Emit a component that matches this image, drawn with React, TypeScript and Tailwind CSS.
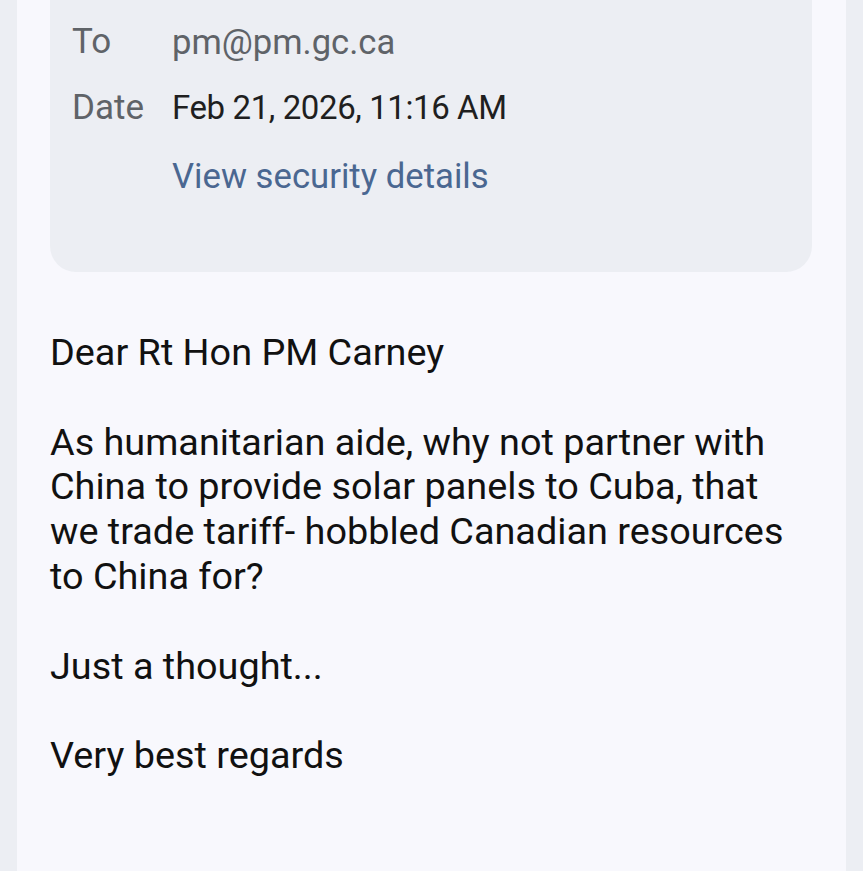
import React from "react";

export default function App() {
  return (
    <div className="w-[863px] h-[871px] bg-[#eceef3] overflow-hidden" style={{ fontFamily: "Roboto, 'Noto Sans', sans-serif" }}>
      <div className="ml-[17px] w-[829px] h-full bg-[#f8f8fd] pl-[33px] pr-[34px]">
        <div className="bg-[#eceef3] rounded-b-[26px] h-[272px] pl-[22px] pt-[20px]">
          <div className="grid grid-cols-[100px_1fr] gap-y-[22px] text-[34px] leading-[44px]">
            <div className="text-[#5f6368] text-[35px]">To</div>
            <div className="text-[#5f6368] text-[34.6px]">pm@pm.gc.ca</div>
            <div className="text-[#5f6368] text-[35px]">Date</div>
            <div className="text-[#1f1f1f] text-[33px] tracking-[-0.4px]">Feb 21, 2026, 11:16 AM</div>
            <div></div>
            <div className="text-[#4a6791] mt-[2px] text-[34.7px]">View security details</div>
          </div>
        </div>
        <div className="pt-[58px] text-[37.8px] leading-[44.8px] text-[#111111]">
          <div>Dear Rt Hon PM Carney</div>
          <div>&nbsp;</div>
          <div className="whitespace-nowrap">
            As humanitarian aide, why not partner with<br />
            China to provide solar panels to Cuba, that<br />
            we trade tariff- hobbled Canadian resources<br />
            to China for?
          </div>
          <div>&nbsp;</div>
          <div>Just a thought...</div>
          <div>&nbsp;</div>
          <div>Very best regards</div>
        </div>
      </div>
    </div>
  );
}
